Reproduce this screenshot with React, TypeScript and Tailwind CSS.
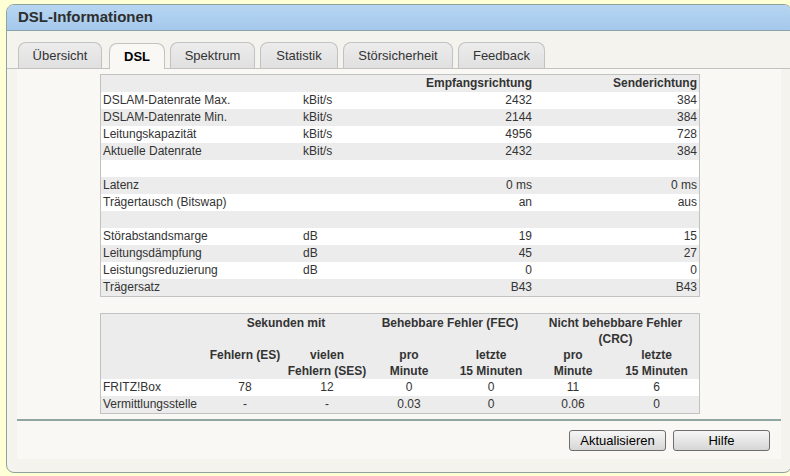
import React from "react";

const tabs = [
  { label: "Übersicht", w: "w-[84px]" },
  { label: "DSL", w: "ml-[2px] w-[56px]" },
  { label: "Spektrum", w: "w-[85px]" },
  { label: "Statistik", w: "w-[78px]" },
  { label: "Störsicherheit", w: "w-[110px]" },
  { label: "Feedback", w: "w-[87px]" },
];

type Row = { label: string; unit: string; rx: string; tx: string };

const rows: Row[] = [
  { label: "DSLAM-Datenrate Max.", unit: "kBit/s", rx: "2432", tx: "384" },
  { label: "DSLAM-Datenrate Min.", unit: "kBit/s", rx: "2144", tx: "384" },
  { label: "Leitungskapazität", unit: "kBit/s", rx: "4956", tx: "728" },
  { label: "Aktuelle Datenrate", unit: "kBit/s", rx: "2432", tx: "384" },
  { label: "", unit: "", rx: "", tx: "" },
  { label: "Latenz", unit: "", rx: "0 ms", tx: "0 ms" },
  { label: "Trägertausch (Bitswap)", unit: "", rx: "an", tx: "aus" },
  { label: "", unit: "", rx: "", tx: "" },
  { label: "Störabstandsmarge", unit: "dB", rx: "19", tx: "15" },
  { label: "Leitungsdämpfung", unit: "dB", rx: "45", tx: "27" },
  { label: "Leistungsreduzierung", unit: "dB", rx: "0", tx: "0" },
  { label: "Trägersatz", unit: "", rx: "B43", tx: "B43" },
];

const errors = [
  { label: "FRITZ!Box", vals: ["78", "12", "0", "0", "11", "6"] },
  { label: "Vermittlungsstelle", vals: ["-", "-", "0.03", "0", "0.06", "0"] },
];

export default function App() {
  return (
    <div className="h-[476px] w-[790px] overflow-hidden bg-[#ffffd6] pl-[6px] pt-[4px] font-['Liberation_Sans',Arial,sans-serif] text-[12px] text-[#333]">
      <div className="h-[469px] w-[786px] overflow-hidden rounded-[8px] border border-[#8fa39e] bg-[#f4f3ee]">
        <div className="flex h-[26px] items-center border-b border-[#8aa2aa] bg-gradient-to-b from-[#b6d5f2] to-[#a5c9ec] pl-[11px] text-[15px] font-bold text-[#2e2e2e]">
          DSL-Informationen
        </div>

        <div className="flex gap-[5px] border-b border-[#c2c2c2] pl-[11px] pt-[11px]">
          {tabs.map((t) => {
            const active = t.label === "DSL";
            return (
              <div
                key={t.label}
                className={
                  active
                    ? `relative top-[1px] flex h-[26px] items-center justify-center rounded-t-[8px] border border-b-0 border-[#c2c2c2] bg-[#f9f8f4] text-[13px] font-bold text-black ${t.w}`
                    : `flex h-[26px] items-center justify-center rounded-t-[8px] border border-b-0 border-[#c2c2c2] bg-gradient-to-b from-[#ececec] to-[#e0e0e0] text-[13px] text-[#333] ${t.w}`
                }
              >
                {t.label}
              </div>
            );
          })}
        </div>

        <div className="mx-[10px] bg-[#f9f8f4] pb-[8px] pt-[5px]">
          <div className="ml-[83px] w-[600px] border border-[#c2c2c2]">
            <table className="w-full table-fixed border-collapse">
              <colgroup>
                <col className="w-[200px]" />
                <col className="w-[80px]" />
                <col className="w-[153px]" />
                <col className="w-[165px]" />
              </colgroup>
              <thead>
                <tr className="h-[17px] bg-[#ececec] font-bold leading-[17px]">
                  <th />
                  <th />
                  <th className="px-[2px] text-right">Empfangsrichtung</th>
                  <th className="px-[2px] text-right">Senderichtung</th>
                </tr>
              </thead>
              <tbody>
                {rows.map((r, i) => (
                  <tr
                    key={i}
                    className={i % 2 === 0 ? "h-[17px] bg-white leading-[17px]" : "h-[17px] bg-[#ececec] leading-[17px]"}
                  >
                    <td className="px-[2px]">{r.label}</td>
                    <td className="px-[2px]">{r.unit}</td>
                    <td className="px-[2px] text-right">{r.rx}</td>
                    <td className="px-[2px] text-right">{r.tx}</td>
                  </tr>
                ))}
              </tbody>
            </table>
          </div>

          <div className="ml-[83px] mt-[16px] w-[600px] border border-[#c2c2c2]">
            <table className="w-full table-fixed border-collapse">
              <colgroup>
                <col className="w-[103px]" />
                <col className="w-[82px]" />
                <col className="w-[82px]" />
                <col className="w-[82px]" />
                <col className="w-[82px]" />
                <col className="w-[82px]" />
                <col className="w-[85px]" />
              </colgroup>
              <thead className="bg-[#ececec] font-bold leading-[16px]">
                <tr className="h-[33px]">
                  <th />
                  <th colSpan={2} className="px-[2px] pt-[1px] text-center align-top">
                    Sekunden mit
                  </th>
                  <th colSpan={2} className="px-[2px] pt-[1px] text-center align-top">
                    Behebbare Fehler (FEC)
                  </th>
                  <th colSpan={2} className="px-[10px] pt-[1px] text-center align-top">
                    Nicht behebbare Fehler (CRC)
                  </th>
                </tr>
                <tr className="h-[32px]">
                  <th />
                  <th className="text-center align-top">Fehlern (ES)</th>
                  <th className="text-center align-top">
                    vielen
                    <br />
                    Fehlern (SES)
                  </th>
                  <th className="text-center align-top">
                    pro
                    <br />
                    Minute
                  </th>
                  <th className="text-center align-top">
                    letzte
                    <br />
                    15 Minuten
                  </th>
                  <th className="text-center align-top">
                    pro
                    <br />
                    Minute
                  </th>
                  <th className="text-center align-top">
                    letzte
                    <br />
                    15 Minuten
                  </th>
                </tr>
              </thead>
              <tbody>
                {errors.map((e, i) => (
                  <tr
                    key={e.label}
                    className={i === 0 ? "h-[17px] bg-white leading-[17px]" : "h-[17px] bg-[#ececec] leading-[17px]"}
                  >
                    <td className="px-[2px]">{e.label}</td>
                    {e.vals.map((v, j) => (
                      <td key={j} className="text-center">
                        {v}
                      </td>
                    ))}
                  </tr>
                ))}
              </tbody>
            </table>
          </div>

          <div className="mt-[5px] h-[2px] bg-[#8fa6a1]" />

          <div className="mt-[9px] flex justify-end gap-[7px] pr-[11px]">
            <button className="h-[21px] w-[97px] rounded-[3px] border border-[#6e6e6e] bg-gradient-to-b from-[#f6f6f6] to-[#d6d6d6] text-[13px] leading-none text-black">
              Aktualisieren
            </button>
            <button className="h-[21px] w-[97px] rounded-[3px] border border-[#6e6e6e] bg-gradient-to-b from-[#f6f6f6] to-[#d6d6d6] text-[13px] leading-none text-black">
              Hilfe
            </button>
          </div>
        </div>
      </div>
    </div>
  );
}
